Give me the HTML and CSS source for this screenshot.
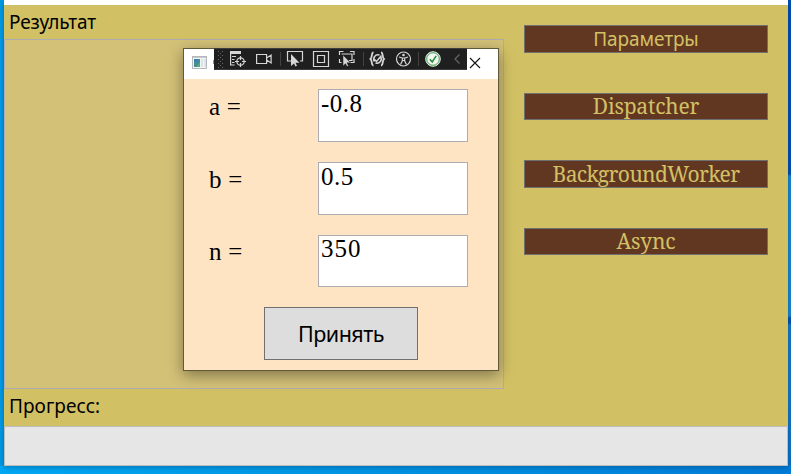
FILE: index.html
```html
<!DOCTYPE html>
<html lang="ru">
<head>
<meta charset="utf-8">
<title>Результат</title>
<link rel="stylesheet" href="styles.css">
</head>
<body>
<div class="desktop">
  <main class="window">
    <div class="window-top"></div>
    <div class="content">
      <section class="left">
        <div class="label result-label"><span>Результат</span></div>
        <div class="result-box"></div>
        <div class="label progress-label"><span>Прогресс:</span></div>
      </section>
      <nav class="actions">
        <button class="action sans"><span>Параметры</span></button>
        <button class="action short dispatcher"><span>Dispatcher</span></button>
        <button class="action worker"><span>BackgroundWorker</span></button>
        <button class="action short async"><span>Async</span></button>
      </nav>
    </div>
    <div class="progress"></div>
  </main>
  <div class="dialog">
    <header class="titlebar">
      <svg class="app-icon" width="16" height="14" viewBox="0 0 16 14">
        <rect x=".5" y=".5" width="14" height="12" fill="#f4f5f6" stroke="#b4b8bc"/>
        <path d="M1 1.5h13" stroke="#c5c9cd"/>
        <rect x="2" y="3" width="6" height="8" fill="#438f91"/>
        <path d="M2 3h4v3H2z" fill="#3f7faf"/><path d="M4 11l4-5v5z" fill="#5ba779"/>
        <rect x="9" y="3" width="2" height="8" fill="#d9e3ea"/><rect x="12" y="3" width="2" height="8" fill="#dfe3e5"/>
      </svg>
      <i class="title-speck"></i>
      <svg class="close" width="12" height="12" viewBox="0 0 12 12"><path d="M1 1l10 10M11 1L1 11" stroke="#111" stroke-width="1.1"/></svg>
    </header>
    <form class="form">
      <div class="row"><label>a =</label><div class="field">-0.8</div></div>
      <div class="row"><label>b =</label><div class="field">0.5</div></div>
      <div class="row last"><label>n =</label><div class="field">350</div></div>
      <button type="button" class="accept"><span>Принять</span></button>
    </form>
    <svg class="debugbar" width="253" height="22" viewBox="0 0 253 22" fill="none" stroke="#d6d6d6" stroke-width="1.2">
      <rect width="253" height="22" fill="#1f1f1f" stroke="none"/>
      <path d="M0 .5h253M0 21.5h253" stroke="#3d3d3d" stroke-width="1"/>
      <g stroke="#686868" stroke-width="1" stroke-dasharray="1 3"><path d="M4.500 3v17M8.500 3v17"/><path d="M6.500 5v14"/></g>
      <path d="M16 3h11v3H16z" fill="#d6d6d6" stroke="none"/>
      <path d="M16.600 6v11h4M18 8.500h4M18 11.500h2.500M18 14.500h2.500"/>
      <circle cx="26.500" cy="13.500" r="3.700"/><path d="M26.500 8v4M26.500 15v4M21 13.500h4M28 13.500h4"/>
      <path d="M42.600 6.500h10v9h-10zM52.600 10l4.500-3v8l-4.500-3"/>
      <path d="M66.500 4v14M149.500 4v14M204.500 4v14" stroke="#424242" stroke-width="1"/>
      <path d="M77 13h-3.500V3.500h15v9.500H86"/><path d="M77 6v12l3-2.500 1.500 3 1.500-.8-1.500-3h4z" fill="#d6d6d6" stroke="none"/>
      <path d="M99.500 3.500h15v15h-15zM103.500 7.500h7v7h-7z"/>
      <path d="M125.500 7V3.500h4M136 3.500h4V7M140 11v3.500h-4M127.500 6h10.500v6.500h-3M125.500 11v3.500h2"/><path d="M129 7v11l2.500-2.300 1.500 2.800 1.500-.8-1.500-2.900h3.500z" fill="#d6d6d6" stroke="#1f1f1f" stroke-width=".5"/>
      <path d="M159.500 4.500c-2.500 0-1 5-3 6.500 2 1.500.5 6.500 3 6.500M167 4.500c2.500 0 1 5 3 6.500-2 1.500-.5 6.500-3 6.500" stroke-width="1.800"/>
      <path d="M165.500 7a4.300 4.300 0 0 0-5 6.500M161.500 15a4.300 4.300 0 0 0 5-6.500M160 11l2.500 2.500 5-6" stroke-width="1.500"/>
      <circle cx="189.500" cy="11" r="7"/><circle cx="189.500" cy="7" r="1.300" fill="#d6d6d6" stroke="none"/><path d="M185 9l3.200 1h2.600l3.200-1M188.300 10v3l-1.800 3.500M190.700 10v3l1.800 3.500M188.300 12.500h2.400"/>
      <circle cx="219" cy="11" r="7.300" fill="#f4f6f3" stroke="#dce8dc" stroke-width="1"/><circle cx="219" cy="11" r="6.300" stroke="#3c9b4b" stroke-width="1"/><path d="M215.800 11.300l2.400 2.600 4-6" stroke="#278d36" stroke-width="1.600"/>
      <path d="M245.500 6.500l-4.500 4.500 4.500 4.500" stroke="#666"/>
    </svg>
  </div>
</div>
</body>
</html>
```
FILE: styles.css
```css
* { box-sizing: border-box; }
body { margin: 0; overflow: hidden; }
button { appearance: none; padding: 0; border-radius: 0; }
.desktop {
  position: relative;
  width: 791px;
  height: 474px;
  padding-left: 4px;
  background:
    linear-gradient(180deg, #0050b8 0 174px, #178ad0 176px 316px, #0053b8 318px 323px, #157bc8 325px 395px, #0873ca 474px) right top / 3px 466px no-repeat,
    linear-gradient(90deg, #00a8f5, #009ae9 35%, #007cd9) left bottom / 100% 8px no-repeat,
    #009ce8;
  font-family: "Noto Sans", "Open Sans", sans-serif;
  color: #000;
}
.window {
  display: flex;
  flex-direction: column;
  width: 784px;
  height: 466px;
  background: #d2c164;
  box-shadow: 0 1px 6px rgba(0, 25, 50, .35);
}
.window-top { height: 5px; background: #fff; }
.content { display: flex; height: 421px; }
.left { display: flex; flex-direction: column; width: 500px; }
.label { padding-left: 5px; font-size: 19px; white-space: nowrap; }
.result-label { height: 34px; line-height: 35px; letter-spacing: -.1px; }
.result-box { height: 350px; border: 1px solid #abadb3; background: #d3c178; }
.progress-label { height: 37px; line-height: 35px; letter-spacing: .05px; }
.actions { display: flex; flex-direction: column; gap: 40px; margin: 20px 0 0 20px; width: 244px; }
.action {
  height: 28px;
  border: 1px solid #707070;
  background: #623721;
  color: #d2c164;
  font: 21px/25px "Noto Serif", "Droid Serif", "Liberation Serif", serif;
}
.action.short { height: 27px; }
.action span { display: block; }
.action.sans { font: 19px/26px "Noto Sans", sans-serif; letter-spacing: -.1px; }
.dispatcher, .async { letter-spacing: -.2px; }
.worker { letter-spacing: -.6px; }
.progress { height: 40px; border: 1px solid #bcbcbc; background: #e6e6e6; }
.dialog {
  position: absolute;
  left: 183px;
  top: 48px;
  width: 316px;
  height: 323px;
  border: 1px solid #625a36;
  background: #ffe4c4;
  box-shadow: 0 4px 14px rgba(0, 0, 0, .4);
}
.titlebar { display: flex; align-items: center; height: 30px; padding: 0 17px 0 8px; background: #fff; }
.app-icon { margin-top: -2px; }
.title-speck { width: 2px; height: 4px; margin: -5px 0 0 5px; background: #bd8a4c; }
.close { margin-left: auto; margin-top: -2px; }
.debugbar { position: absolute; left: 30px; top: -1px; }
.form { display: flex; flex-direction: column; padding: 10px 30px 0 25px; }
.row { display: flex; justify-content: space-between; height: 53px; margin-bottom: 20px; }
.row.last { height: 52px; }
label { font: 25px/36px "Liberation Serif", serif; letter-spacing: .2px; }
.row.last label { line-height: 34px; }
.field {
  width: 150px;
  padding-left: 2px;
  border: 1px solid #abadb3;
  background: #fff;
  font: 25px/27px "Liberation Serif", serif;
  letter-spacing: .5px;
}
.row.last .field { line-height: 25px; letter-spacing: 1px; }
.accept {
  width: 154px;
  height: 53px;
  margin-left: 55px;
  border: 1px solid #707070;
  background: #ddd;
  color: #000;
  font: 21.5px/50px "Noto Sans", sans-serif;
  letter-spacing: -.5px;
}
```
